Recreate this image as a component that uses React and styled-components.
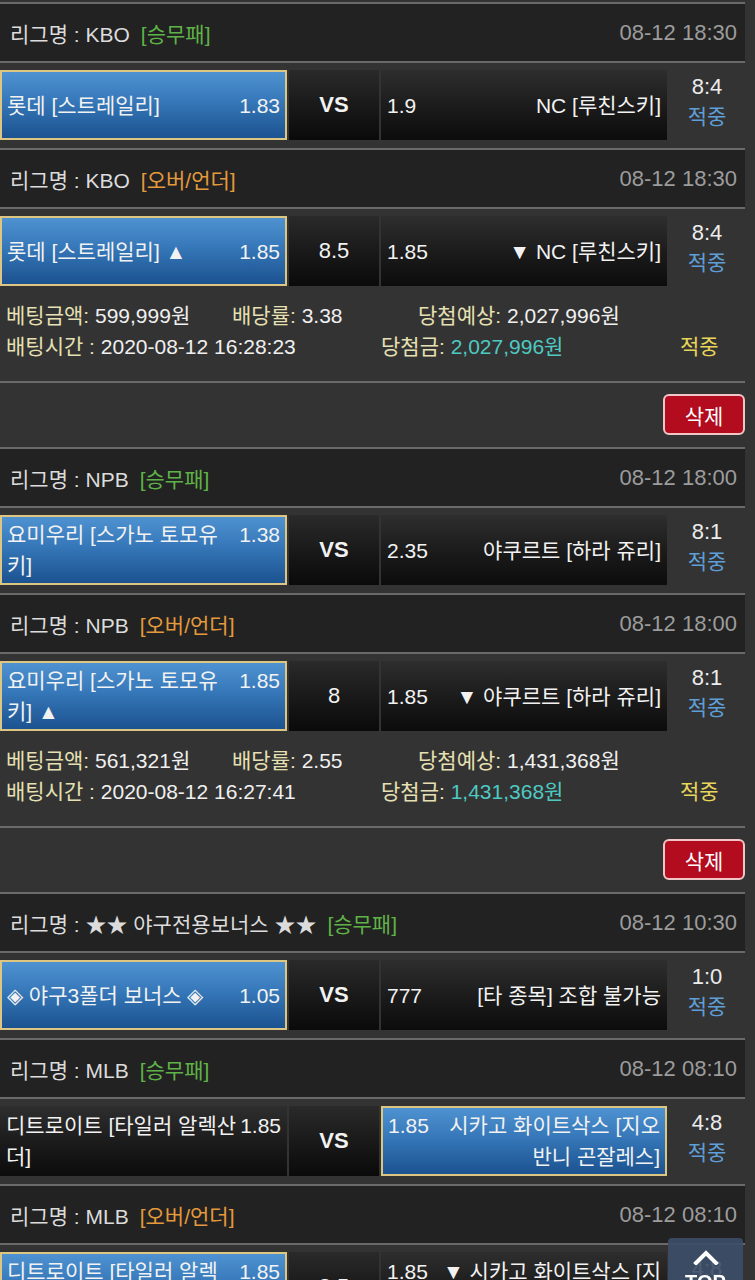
import styled, { createGlobalStyle } from "styled-components";

const GlobalStyle = createGlobalStyle`
  body {
    margin: 0;
    background: #333;
    font-family: "Liberation Sans", "Noto Sans CJK KR", sans-serif;
    font-size: 21px;
    color: #e6e6e6;
  }
`;

const LINE = "#6a6a6a";

const bets = [
  {
    games: [
      {
        league: "KBO", type: "승무패", time: "08-12 18:30",
        home: { name: "롯데 [스트레일리]", odds: "1.83" },
        mid: "VS",
        away: { name: "NC [루친스키]", odds: "1.9" },
        pick: "home", score: "8:4", result: "적중",
      },
      {
        league: "KBO", type: "오버/언더", time: "08-12 18:30",
        home: { name: "롯데 [스트레일리] ▲", odds: "1.85" },
        mid: "8.5",
        away: { name: "▼ NC [루친스키]", odds: "1.85" },
        pick: "home", score: "8:4", result: "적중",
      },
    ],
    info: {
      amount: "599,999원", rate: "3.38", expect: "2,027,996원",
      time: "2020-08-12 16:28:23", win: "2,027,996원", status: "적중",
    },
  },
  {
    games: [
      {
        league: "NPB", type: "승무패", time: "08-12 18:00",
        home: { name: "요미우리 [스가노 토모유키]", odds: "1.38" },
        mid: "VS",
        away: { name: "야쿠르트 [하라 쥬리]", odds: "2.35" },
        pick: "home", score: "8:1", result: "적중",
      },
      {
        league: "NPB", type: "오버/언더", time: "08-12 18:00",
        home: { name: "요미우리 [스가노 토모유키] ▲", odds: "1.85" },
        mid: "8",
        away: { name: "▼ 야쿠르트 [하라 쥬리]", odds: "1.85" },
        pick: "home", score: "8:1", result: "적중",
      },
    ],
    info: {
      amount: "561,321원", rate: "2.55", expect: "1,431,368원",
      time: "2020-08-12 16:27:41", win: "1,431,368원", status: "적중",
    },
  },
  {
    games: [
      {
        league: "★★ 야구전용보너스 ★★", type: "승무패", time: "08-12 10:30",
        home: { name: "◈ 야구3폴더 보너스 ◈", odds: "1.05" },
        mid: "VS",
        away: { name: "[타 종목] 조합 불가능", odds: "777" },
        pick: "home", score: "1:0", result: "적중",
      },
      {
        league: "MLB", type: "승무패", time: "08-12 08:10",
        home: { name: "디트로이트 [타일러 알렉산더]", odds: "1.85" },
        mid: "VS",
        away: { name: "시카고 화이트삭스 [지오반니 곤잘레스]", odds: "1.85" },
        pick: "away", score: "4:8", result: "적중",
      },
      {
        league: "MLB", type: "오버/언더", time: "08-12 08:10",
        home: { name: "디트로이트 [타일러 알렉산더] ▲", odds: "1.85" },
        mid: "8.5",
        away: { name: "▼ 시카고 화이트삭스 [지오반니 곤잘레스]", odds: "1.85" },
        pick: "home", score: "4:8", result: "적중",
      },
    ],
  },
];

export default function App() {
  return (
    <>
      <GlobalStyle />
      <List>
        {bets.map((bet, i) => (
          <Bet key={i} bet={bet} />
        ))}
      </List>
      <TopButton href="#top">
        <svg width="26" height="15" viewBox="0 0 26 15">
          <polyline points="3,13 13,3 23,13" fill="none" stroke="#fff" strokeWidth="4" strokeLinecap="square" />
        </svg>
        <span>TOP</span>
      </TopButton>
    </>
  );
}

function Bet({ bet }) {
  return (
    <section>
      {bet.games.map((g, i) => (
        <Game key={i} game={g} />
      ))}
      {bet.info && (
        <>
          <Info>
            <InfoLine $cols="226px 186px 1fr">
              <span><Label>베팅금액:</Label> {bet.info.amount}</span>
              <span><Label>배당률:</Label> {bet.info.rate}</span>
              <span><Label>당첨예상:</Label> {bet.info.expect}</span>
            </InfoLine>
            <InfoLine $cols="375px 299px 1fr">
              <span><Label>배팅시간 :</Label> {bet.info.time}</span>
              <span><Label>당첨금:</Label> <WinMoney>{bet.info.win}</WinMoney></span>
              <Status>{bet.info.status}</Status>
            </InfoLine>
          </Info>
          <DeleteRow>
            <DeleteButton type="button">삭제</DeleteButton>
          </DeleteRow>
        </>
      )}
    </section>
  );
}

function Game({ game }) {
  return (
    <>
      <LeagueHeader>
        <span>
          리그명 : {game.league}
          <TypeTag $ou={game.type === "오버/언더"}>[{game.type}]</TypeTag>
        </span>
        <Time>{game.time}</Time>
      </LeagueHeader>
      <GameRow>
        <Side $picked={game.pick === "home"}>
          <SideInner>
            <TeamName>{game.home.name}</TeamName>
            <Odds>{game.home.odds}</Odds>
          </SideInner>
        </Side>
        <Middle $bold={game.mid === "VS"}>{game.mid}</Middle>
        <Side $picked={game.pick === "away"}>
          <SideInner>
            <Odds>{game.away.odds}</Odds>
            <TeamName $right>{game.away.name}</TeamName>
          </SideInner>
        </Side>
        <Score>
          <span>{game.score}</span>
          <Hit>{game.result}</Hit>
        </Score>
      </GameRow>
    </>
  );
}

const List = styled.div`
  width: 745px;
  padding-top: 2px;
`;

const LeagueHeader = styled.div`
  display: flex;
  justify-content: space-between;
  align-items: center;
  height: 57px;
  padding: 0 8px 0 10px;
  background: #222;
  border-top: 2px solid ${LINE};
  color: #dcdcdc;
  white-space: nowrap;
`;

const TypeTag = styled.span`
  margin-left: 11px;
  color: ${(p) => (p.$ou ? "#e29a3c" : "#5fb247")};
`;

const Time = styled.span`
  color: #9c9c9c;
  font-size: 22px;
`;

const GameRow = styled.div`
  display: grid;
  grid-template-columns: 287px 90px 286px 1fr;
  column-gap: 2px;
  height: 87px;
  box-sizing: border-box;
  padding: 7px 0 8px;
  border-top: 2px solid ${LINE};
`;

const Side = styled.div`
  display: flex;
  align-items: center;
  padding: ${(p) => (p.$picked ? "0 5px" : "0 6px")};
  border: ${(p) => (p.$picked ? "2px solid #dcc682" : "none")};
  background: ${(p) =>
    p.$picked
      ? "linear-gradient(to bottom, #4f92d1 0%, #3577b8 45%, #1c5290 100%)"
      : "linear-gradient(to bottom, #2e2e2e 0%, #1a1a1a 55%, #0c0c0c 100%)"};
  color: #f2f2f2;
`;

const SideInner = styled.div`
  display: flex;
  align-items: flex-start;
  gap: 4px;
  width: 100%;
  line-height: 31px;
`;

const TeamName = styled.span`
  flex: 1;
  min-width: 0;
  word-break: break-all;
  text-align: ${(p) => (p.$right ? "right" : "left")};
`;

const Odds = styled.span`
  flex: none;
`;

const Middle = styled.div`
  display: flex;
  align-items: center;
  justify-content: center;
  background: linear-gradient(to bottom, #2a2a2a 0%, #181818 55%, #0a0a0a 100%);
  color: #f2f2f2;
  font-weight: ${(p) => (p.$bold ? 700 : 400)};
  font-size: 22px;
`;

const Score = styled.div`
  display: flex;
  flex-direction: column;
  align-items: center;
  justify-content: center;
  padding-bottom: 6px;
  line-height: 30px;
  font-size: 22px;
  color: #ececec;
`;

const Hit = styled.span`
  color: #5f9fd8;
  font-size: 21px;
`;

const Info = styled.div`
  padding: 6px 0 19px;
  height: 87px;
  box-sizing: border-box;
`;

const InfoLine = styled.div`
  display: grid;
  grid-template-columns: ${(p) => p.$cols};
  padding-left: 6px;
  line-height: 31px;
  color: #f0f0f0;
  white-space: nowrap;
`;

const Label = styled.span`
  color: #e6e0b2;
`;

const WinMoney = styled.span`
  color: #4ec9c2;
`;

const Status = styled.span`
  color: #e8d65a;
`;

const DeleteRow = styled.div`
  display: flex;
  justify-content: flex-end;
  height: 66px;
  box-sizing: border-box;
  padding-top: 11px;
  border-top: 2px solid ${LINE};
`;

const DeleteButton = styled.button`
  width: 82px;
  height: 41px;
  border: 2px solid #f0c6c6;
  border-radius: 6px;
  background: #b20c1e;
  color: #fff;
  font-family: inherit;
  font-size: 21px;
  padding: 0;
`;

const TopButton = styled.a`
  position: fixed;
  right: 12px;
  bottom: -24px;
  width: 75px;
  height: 66px;
  box-sizing: border-box;
  padding-top: 12px;
  display: flex;
  flex-direction: column;
  align-items: center;
  gap: 6px;
  border-radius: 4px 4px 0 0;
  background: rgba(60, 78, 104, 0.9);
  color: #fff;
  font-weight: 700;
  font-size: 20px;
  line-height: 22px;
  text-decoration: none;
`;
